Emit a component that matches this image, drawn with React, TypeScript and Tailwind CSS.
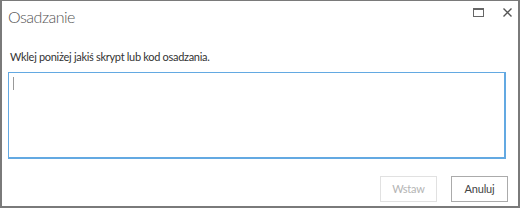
import React from "react";

export default function App() {
  return (
    <div
      className="w-[520px] h-[208px] bg-white border-t border-l-2 border-r-2 border-b-2 border-[#7a7a7a] flex flex-col text-[#444]"
      style={{ fontFamily: 'Lato, "Open Sans", sans-serif' }}
    >
      {/* Header */}
      <div className="flex items-start justify-between h-[36px]">
        <h1 className="pl-[6px] pt-[4px] text-[16px] tracking-[-0.5px] font-light leading-[24px] text-[#555]">Osadzanie</h1>
        <div className="flex items-center gap-[19px] pt-[7px] pr-[6px]">
          <svg width="11" height="9" viewBox="0 0 11 9" className="text-[#666]">
            <rect x="0.5" y="0.5" width="10" height="8" fill="none" stroke="currentColor" />
            <rect x="0" y="0" width="11" height="2" fill="currentColor" />
          </svg>
          <svg width="9" height="9" viewBox="0 0 9 9" className="text-[#555]">
            <path d="M0.5 0.5 L8.5 8.5 M8.5 0.5 L0.5 8.5" stroke="currentColor" strokeWidth="1.4" />
          </svg>
        </div>
      </div>

      {/* Body */}
      <div className="px-[6px] flex flex-col">
        <p className="pl-[2px] text-[11px] tracking-[-0.3px] leading-[16px] text-[#333] mt-[12px]">
          Wklej poniżej jakiś skrypt lub kod osadzania.
        </p>
        <div className="mt-[7px] h-[87px] w-[498px] border border-[#63a9e2] border-b-2 border-r-2 pl-[4px] pt-[4px]">
          <div className="w-[1px] h-[13px] bg-[#999]" />
        </div>
      </div>

      {/* Footer */}
      <div className="flex justify-end gap-[14px] pr-[10px] mt-[17px]">
        <button className="w-[57px] h-[26px] border border-[#e1e1e1] text-[11px] tracking-[-0.2px] text-[#b4b4b4]">Wstaw</button>
        <button className="w-[57px] h-[26px] border border-[#ababab] text-[11px] tracking-[-0.2px] text-[#444]">Anuluj</button>
      </div>
    </div>
  );
}
